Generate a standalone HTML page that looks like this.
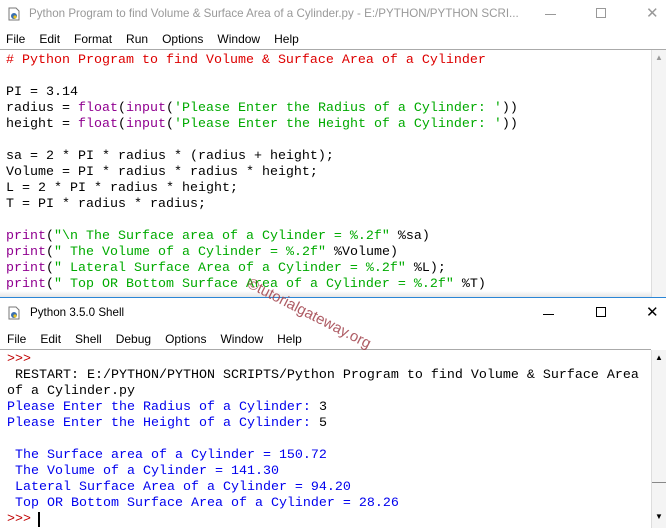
<!DOCTYPE html>
<html><head><style>
*{margin:0;padding:0;box-sizing:border-box}
body{width:666px;height:528px;overflow:hidden;background:#fff;position:relative;font-family:"Liberation Sans",sans-serif}
.abs{position:absolute}
.title{font-size:11.6px;color:#999;white-space:nowrap}
.menu{font-size:12px;color:#000;white-space:nowrap;word-spacing:0}
.menu span{margin-right:14px}
pre{font-family:"Liberation Mono",monospace;font-size:13.33px;line-height:16px;position:absolute;left:6px;white-space:pre}
.c{color:#dd0000}.k{color:#900090}.s{color:#00aa00}.b{color:#0000ee}.o{color:#c00000}
.sb{position:absolute;left:651px;width:15px;background:#f4f4f4;border-left:1px solid #ddd}
.ic{position:absolute;width:12px;height:14px}
</style></head><body>
<!-- editor title -->
<svg class="ic" style="left:8px;top:7px" viewBox="0 0 12 14"><path d="M1 1h7l3 3v9H1z" fill="#fff" stroke="#777"/><circle cx="6" cy="9" r="3" fill="#3a6fb0"/><circle cx="7" cy="10" r="1.6" fill="#e8c220"/></svg>
<div class="abs title" style="left:29px;top:7px">Python Program to find Volume &amp; Surface Area of a Cylinder.py - E:/PYTHON/PYTHON SCRI...</div>
<div class="abs" style="left:545px;top:14px;width:11px;height:1px;background:#999"></div>
<div class="abs" style="left:596px;top:8px;width:10px;height:10px;border:1px solid #999"></div>
<div class="abs" style="left:646px;top:4px;font-size:15px;color:#999">✕</div>
<div class="abs menu" style="left:6px;top:32px"><span>File</span><span>Edit</span><span>Format</span><span>Run</span><span>Options</span><span>Window</span><span>Help</span></div>
<div class="abs" style="left:0;top:49px;width:666px;height:1px;background:#aaa"></div>
<div class="sb" style="top:50px;height:247px"></div>
<div class="abs" style="left:655px;top:53px;font-size:8px;color:#999">▲</div>
<pre style="top:53px"><span class="c"># Python Program to find Volume &amp; Surface Area of a Cylinder</span>

PI = 3.14
radius = <span class="k">float</span>(<span class="k">input</span>(<span class="s">'Please Enter the Radius of a Cylinder: '</span>))
height = <span class="k">float</span>(<span class="k">input</span>(<span class="s">'Please Enter the Height of a Cylinder: '</span>))

sa = 2 * PI * radius * (radius + height);
Volume = PI * radius * radius * height;
L = 2 * PI * radius * height;
T = PI * radius * radius;

<span class="k">print</span>(<span class="s">"\n The Surface area of a Cylinder = %.2f"</span> %sa)
<span class="k">print</span>(<span class="s">" The Volume of a Cylinder = %.2f"</span> %Volume)
<span class="k">print</span>(<span class="s">" Lateral Surface Area of a Cylinder = %.2f"</span> %L);
<span class="k">print</span>(<span class="s">" Top OR Bottom Surface Area of a Cylinder = %.2f"</span> %T)</pre>
<div class="abs" style="left:0;top:291px;width:651px;height:6px;background:linear-gradient(#fff,#e6e6e6)"></div>
<!-- shell window -->
<div class="abs" style="left:0;top:297px;width:666px;height:1px;background:#2b86d6"></div>
<svg class="ic" style="left:8px;top:306px" viewBox="0 0 12 14"><path d="M1 1h7l3 3v9H1z" fill="#fff" stroke="#777"/><circle cx="6" cy="9" r="3" fill="#3a6fb0"/><circle cx="7" cy="10" r="1.6" fill="#e8c220"/></svg>
<div class="abs title" style="left:30px;top:306px;color:#000">Python 3.5.0 Shell</div>
<div class="abs" style="left:543px;top:314px;width:11px;height:1px;background:#000"></div>
<div class="abs" style="left:596px;top:307px;width:10px;height:10px;border:1px solid #000"></div>
<div class="abs" style="left:646px;top:303px;font-size:15px;color:#000">✕</div>
<div class="abs menu" style="left:7px;top:332px"><span>File</span><span>Edit</span><span>Shell</span><span>Debug</span><span>Options</span><span>Window</span><span>Help</span></div>
<div class="abs" style="left:0;top:349px;width:651px;height:1px;background:#aaa"></div>
<div class="sb" style="top:350px;height:178px"></div>
<div class="abs" style="left:655px;top:353px;font-size:8px;color:#000">▲</div>
<div class="abs" style="left:652px;top:482px;width:14px;height:1px;background:#888"></div>
<div class="abs" style="left:655px;top:512px;font-size:8px;color:#000">▼</div>
<pre style="top:352px;left:7px"><span class="o">&gt;&gt;&gt;</span>
 RESTART: E:/PYTHON/PYTHON SCRIPTS/Python Program to find Volume &amp; Surface Area
of a Cylinder.py
<span class="b">Please Enter the Radius of a Cylinder: </span>3
<span class="b">Please Enter the Height of a Cylinder: </span>5

<span class="b"> The Surface area of a Cylinder = 150.72
 The Volume of a Cylinder = 141.30
 Lateral Surface Area of a Cylinder = 94.20
 Top OR Bottom Surface Area of a Cylinder = 28.26</span>
<span class="o">&gt;&gt;&gt;</span> </pre>
<div class="abs" style="left:38px;top:512px;width:2px;height:15px;background:#000"></div>
<div class="abs" style="left:252px;top:275px;font-size:15px;color:#a0404a;transform:rotate(27deg);transform-origin:0 0;white-space:nowrap;opacity:.85">©tutorialgateway.org</div>
</body></html>
